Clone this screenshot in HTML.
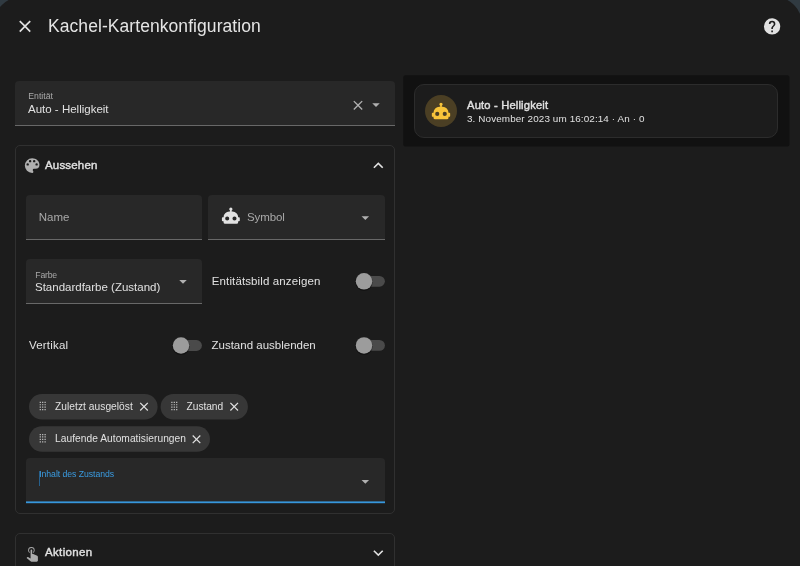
<!DOCTYPE html>
<html lang="de">
<head>
<meta charset="utf-8">
<title>Kachel-Kartenkonfiguration</title>
<style>
*{box-sizing:border-box;margin:0;padding:0}
html,body{width:800px;height:566px;overflow:hidden;background:#303a41;font-family:"Liberation Sans",sans-serif;color:#e1e1e1}
.shape{position:absolute;left:-5.7px;top:-3.5px;width:807.8px;height:620px;background:#1c1c1c;border-radius:27px}
.dialog{position:absolute;left:0;top:0;width:800px;height:566px;overflow:hidden;will-change:transform}
.abs{position:absolute}
.t{position:absolute;white-space:nowrap;line-height:1}
svg{position:absolute;display:block}
.title{left:48px;top:18px;font-size:17.5px;letter-spacing:.065px;color:#e4e4e4}
.field{position:absolute;background:#282828;border-radius:4px 4px 0 0;border-bottom:1px solid #686868}
.flabel{font-size:8.7px;color:#a9a9a9}
.fval{font-size:11.5px;color:#e1e1e1}
.panel{position:absolute;border:1px solid #303030;border-radius:5px}
.ptitle{font-size:11.5px;-webkit-text-stroke:.4px #e1e1e1;color:#e1e1e1}
.lbl{font-size:11.5px;color:#e1e1e1}
.chiptxt{font-size:10.2px;letter-spacing:.05px;color:#e1e1e1}
.card{position:absolute;left:414px;top:84px;width:364px;height:53.5px;border:1px solid #2c2c2c;border-radius:10px;background:#1c1c1c}
.circle{position:absolute;left:425px;top:95px;width:32px;height:32px;border-radius:50%;background:#4b3f24}
</style>
</head>
<body>
<div class="dialog">
  <div class="shape"></div>

  <!-- header -->
  <svg style="left:15px;top:16px" width="21" height="22" viewBox="0 0 21 22"><g transform="translate(0.0 0.3) scale(0.83333)"><path fill="#e1e1e1" d="M19,6.41L17.59,5L12,10.59L6.41,5L5,6.41L10.59,12L5,17.59L6.41,19L12,13.41L17.59,19L19,17.59L13.41,12L19,6.41Z"/></g></svg>
  <div class="t title">Kachel-Kartenkonfiguration</div>
  <svg style="left:762px;top:16px" width="21" height="22" viewBox="0 0 21 22"><g transform="translate(0.3 0.65) scale(0.81667)"><path fill="#e1e1e1" d="M15.07,11.25L14.17,12.17C13.45,12.89 13,13.5 13,15H11V14.5C11,13.39 11.45,12.39 12.17,11.67L13.41,10.41C13.78,10.05 14,9.55 14,9C14,7.89 13.1,7 12,7A2,2 0 0,0 10,9H8A4,4 0 0,1 12,5A4,4 0 0,1 16,9C16,9.88 15.64,10.67 15.07,11.25M13,19H11V17H13M12,2A10,10 0 0,0 2,12A10,10 0 0,0 12,22A10,10 0 0,0 22,12C22,6.47 17.5,2 12,2Z"/></g></svg>

  <!-- entity field -->
  <div class="field" style="left:15px;top:81px;width:380px;height:45px"></div>
  <div class="t flabel" style="left:28.3px;top:92.3px">Entität</div>
  <div class="t fval" style="left:28px;top:104.3px">Auto - Helligkeit</div>
  <svg style="left:350px;top:97px" width="17" height="18" viewBox="0 0 17 18"><g transform="translate(0.0 0.3) scale(0.66667)"><path fill="#b0b0b0" d="M19,6.41L17.59,5L12,10.59L6.41,5L5,6.41L10.59,12L5,17.59L6.41,19L12,13.41L17.59,19L19,17.59L13.41,12L19,6.41Z"/></g></svg>
  <svg style="left:367px;top:95px" width="19" height="20" viewBox="0 0 19 20"><g transform="translate(0.0 0.7) scale(0.75)"><path fill="#b0b0b0" d="M7,10L12,15L17,10H7Z"/></g></svg>

  <!-- preview -->
  <svg style="left:0;top:0" width="800" height="566"><rect x="403.3" y="75.2" width="386.1" height="71.4" rx="2" fill="#111111"/></svg>
  <div class="card"></div>
  <div class="circle"></div>
  <svg style="left:431px;top:101px" width="21" height="21" viewBox="0 0 21 21"><g transform="translate(0.0 0.0) scale(0.83333)"><path fill="#f8c43a" d="M12,2A2,2 0 0,1 14,4C14,4.74 13.6,5.39 13,5.73V7H14A7,7 0 0,1 21,14H22A1,1 0 0,1 23,15V18A1,1 0 0,1 22,19H21V20A2,2 0 0,1 19,22H5A2,2 0 0,1 3,20V19H2A1,1 0 0,1 1,18V15A1,1 0 0,1 2,14H3A7,7 0 0,1 10,7H11V5.73C10.4,5.39 10,4.74 10,4A2,2 0 0,1 12,2M7.5,13A2.5,2.5 0 0,0 5,15.5A2.5,2.5 0 0,0 7.5,18A2.5,2.5 0 0,0 10,15.5A2.5,2.5 0 0,0 7.5,13M16.5,13A2.5,2.5 0 0,0 14,15.5A2.5,2.5 0 0,0 16.5,18A2.5,2.5 0 0,0 19,15.5A2.5,2.5 0 0,0 16.5,13Z"/></g></svg>
  <div class="t" style="left:467px;top:99.5px;font-size:11.2px;letter-spacing:.17px;-webkit-text-stroke:.4px #e1e1e1;color:#e1e1e1">Auto - Helligkeit</div>
  <div class="t" style="left:467px;top:114.2px;font-size:9.9px;letter-spacing:.11px;color:#e1e1e1">3. November 2023 um 16:02:14 · An · 0</div>

  <!-- Aussehen panel -->
  <div class="panel" style="left:15px;top:145px;width:380px;height:369px"></div>
  <svg style="left:22px;top:155px" width="21" height="22" viewBox="0 0 21 22"><g transform="translate(0.4 0.85) scale(0.8125)"><path fill="#b0b0b0" d="M17.5,12A1.5,1.5 0 0,1 16,10.5A1.5,1.5 0 0,1 17.5,9A1.5,1.5 0 0,1 19,10.5A1.5,1.5 0 0,1 17.5,12M14.5,8A1.5,1.5 0 0,1 13,6.5A1.5,1.5 0 0,1 14.5,5A1.5,1.5 0 0,1 16,6.5A1.5,1.5 0 0,1 14.5,8M9.5,8A1.5,1.5 0 0,1 8,6.5A1.5,1.5 0 0,1 9.5,5A1.5,1.5 0 0,1 11,6.5A1.5,1.5 0 0,1 9.5,8M6.5,12A1.5,1.5 0 0,1 5,10.5A1.5,1.5 0 0,1 6.5,9A1.5,1.5 0 0,1 8,10.5A1.5,1.5 0 0,1 6.5,12M12,3A9,9 0 0,0 3,12A9,9 0 0,0 12,21A1.5,1.5 0 0,0 13.5,19.5C13.5,19.11 13.35,18.76 13.11,18.5C12.88,18.23 12.73,17.88 12.73,17.5A1.5,1.5 0 0,1 14.23,16H16A5,5 0 0,0 21,11C21,6.58 16.97,3 12,3Z"/></g></svg>
  <div class="t ptitle" style="left:45px;top:160px;letter-spacing:.17px">Aussehen</div>
  <svg style="left:368px;top:155px" width="22" height="22" viewBox="0 0 22 22"><g transform="translate(0.3 0.5) scale(0.83333)"><path fill="#e1e1e1" d="M7.41,15.41L12,10.83L16.59,15.41L18,14L12,8L6,14L7.41,15.41Z"/></g></svg>

  <!-- Name / Symbol -->
  <div class="field" style="left:26px;top:195px;width:176px;height:45px"></div>
  <div class="t" style="left:38.7px;top:211.8px;font-size:11.5px;color:#a9a9a9">Name</div>
  <div class="field" style="left:208px;top:195px;width:177px;height:45px"></div>
  <svg style="left:221px;top:205px" width="21" height="22" viewBox="0 0 21 22"><g transform="translate(0.1 0.9) scale(0.8125)"><path fill="#e1e1e1" d="M12,2A2,2 0 0,1 14,4C14,4.74 13.6,5.39 13,5.73V7H14A7,7 0 0,1 21,14H22A1,1 0 0,1 23,15V18A1,1 0 0,1 22,19H21V20A2,2 0 0,1 19,22H5A2,2 0 0,1 3,20V19H2A1,1 0 0,1 1,18V15A1,1 0 0,1 2,14H3A7,7 0 0,1 10,7H11V5.73C10.4,5.39 10,4.74 10,4A2,2 0 0,1 12,2M7.5,13A2.5,2.5 0 0,0 5,15.5A2.5,2.5 0 0,0 7.5,18A2.5,2.5 0 0,0 10,15.5A2.5,2.5 0 0,0 7.5,13M16.5,13A2.5,2.5 0 0,0 14,15.5A2.5,2.5 0 0,0 16.5,18A2.5,2.5 0 0,0 19,15.5A2.5,2.5 0 0,0 16.5,13Z"/></g></svg>
  <div class="t" style="left:247px;top:212.3px;font-size:11.5px;letter-spacing:-.1px;color:#a9a9a9">Symbol</div>
  <svg style="left:356px;top:208px" width="20" height="20" viewBox="0 0 20 20"><g transform="translate(0.3 0.7) scale(0.75)"><path fill="#b0b0b0" d="M7,10L12,15L17,10H7Z"/></g></svg>

  <!-- Farbe / Entitätsbild -->
  <div class="field" style="left:26px;top:259px;width:176px;height:45px"></div>
  <div class="t flabel" style="left:35.3px;top:271px;letter-spacing:-.2px">Farbe</div>
  <div class="t fval" style="left:35px;top:281.8px">Standardfarbe (Zustand)</div>
  <svg style="left:174px;top:272px" width="19" height="20" viewBox="0 0 19 20"><g transform="translate(0.0 0.6) scale(0.75)"><path fill="#b0b0b0" d="M7,10L12,15L17,10H7Z"/></g></svg>
  <div class="t lbl" style="left:211.8px;top:276.1px;letter-spacing:.12px">Entitätsbild anzeigen</div>
  <svg style="left:350px;top:267px" width="44" height="28" viewBox="350 267 44 28"><rect x="359.0" y="275.90000000000003" width="25.9" height="10.8" rx="5.4" fill="#4a4a4a"/><circle cx="364.0" cy="282.2" r="8.7" fill="#000" opacity=".35"/><circle cx="364.0" cy="281.3" r="8.25" fill="#9c9c9c"/></svg>

  <!-- Vertikal / Zustand ausblenden -->
  <div class="t lbl" style="left:29px;top:340.1px;letter-spacing:.2px">Vertikal</div>
  <svg style="left:167px;top:331px" width="44" height="28" viewBox="167 331 44 28"><rect x="176.0" y="340.1" width="25.9" height="10.8" rx="5.4" fill="#4a4a4a"/><circle cx="181.0" cy="346.4" r="8.7" fill="#000" opacity=".35"/><circle cx="181.0" cy="345.5" r="8.25" fill="#9c9c9c"/></svg>
  <div class="t lbl" style="left:211.5px;top:340.1px">Zustand ausblenden</div>
  <svg style="left:350px;top:331px" width="44" height="28" viewBox="350 331 44 28"><rect x="359.0" y="340.0" width="25.9" height="10.8" rx="5.4" fill="#4a4a4a"/><circle cx="364.0" cy="346.29999999999995" r="8.7" fill="#000" opacity=".35"/><circle cx="364.0" cy="345.4" r="8.25" fill="#9c9c9c"/></svg>

  <!-- chips -->
  <svg style="left:0;top:380px" width="400" height="80" viewBox="0 380 400 80">
    <rect x="29" y="394" width="128.6" height="25.6" rx="12.8" fill="#373737"/>
    <g transform="translate(35.45 398.7) scale(0.60417)"><path fill="#c4c4c4" d="M7,19V17H9V19H7M11,19V17H13V19H11M15,19V17H17V19H15M7,15V13H9V15H7M11,15V13H13V15H11M15,15V13H17V15H15M7,11V9H9V11H7M11,11V9H13V11H11M15,11V9H17V11H15M7,7V5H9V7H7M11,7V5H13V7H11M15,7V5H17V7H15Z"/></g>
    <g transform="translate(136.75 399.45) scale(0.60417)"><path fill="#e1e1e1" d="M19,6.41L17.59,5L12,10.59L6.41,5L5,6.41L10.59,12L5,17.59L6.41,19L12,13.41L17.59,19L19,17.59L13.41,12L19,6.41Z"/></g>
    <rect x="160.6" y="394" width="87.3" height="25.6" rx="12.8" fill="#373737"/>
    <g transform="translate(167.05 398.7) scale(0.60417)"><path fill="#c4c4c4" d="M7,19V17H9V19H7M11,19V17H13V19H11M15,19V17H17V19H15M7,15V13H9V15H7M11,15V13H13V15H11M15,15V13H17V15H15M7,11V9H9V11H7M11,11V9H13V11H11M15,11V9H17V11H15M7,7V5H9V7H7M11,7V5H13V7H11M15,7V5H17V7H15Z"/></g>
    <g transform="translate(226.95 399.45) scale(0.60417)"><path fill="#e1e1e1" d="M19,6.41L17.59,5L12,10.59L6.41,5L5,6.41L10.59,12L5,17.59L6.41,19L12,13.41L17.59,19L19,17.59L13.41,12L19,6.41Z"/></g>
    <rect x="29" y="426.2" width="181" height="25.6" rx="12.8" fill="#373737"/>
    <g transform="translate(35.45 430.9) scale(0.60417)"><path fill="#c4c4c4" d="M7,19V17H9V19H7M11,19V17H13V19H11M15,19V17H17V19H15M7,15V13H9V15H7M11,15V13H13V15H11M15,15V13H17V15H15M7,11V9H9V11H7M11,11V9H13V11H11M15,11V9H17V11H15M7,7V5H9V7H7M11,7V5H13V7H11M15,7V5H17V7H15Z"/></g>
    <g transform="translate(189.25 432.05) scale(0.60417)"><path fill="#e1e1e1" d="M19,6.41L17.59,5L12,10.59L6.41,5L5,6.41L10.59,12L5,17.59L6.41,19L12,13.41L17.59,19L19,17.59L13.41,12L19,6.41Z"/></g>
  </svg>
  <div class="t chiptxt" style="left:55px;top:402px">Zuletzt ausgelöst</div>
  <div class="t chiptxt" style="left:186.6px;top:402px;letter-spacing:-.05px">Zustand</div>
  <div class="t chiptxt" style="left:55px;top:434px">Laufende Automatisierungen</div>

  <!-- state content select -->
  <div class="field" style="left:26px;top:458px;width:359px;height:45px;border-bottom:none"></div>
  <svg style="left:0;top:490px" width="800" height="20"><rect x="26" y="11.4" width="359" height="1.8" fill="#3797dc"/></svg>
  <div class="t" style="left:39.2px;top:469.6px;font-size:8.7px;letter-spacing:-.05px;color:#3a9be0">Inhalt des Zustands</div>
  <div class="abs" style="left:39px;top:470.5px;width:1px;height:15px;background:#27608c"></div>
  <svg style="left:356px;top:472px" width="20" height="20" viewBox="0 0 20 20"><g transform="translate(0.3 0.5) scale(0.75)"><path fill="#b0b0b0" d="M7,10L12,15L17,10H7Z"/></g></svg>

  <!-- Aktionen panel -->
  <div class="panel" style="left:15px;top:533px;width:380px;height:60px"></div>
  <svg style="left:22px;top:543px" width="21" height="21" viewBox="0 0 21 21"><g transform="translate(0.46 0.0) scale(0.8125)"><path fill="#acacac" d="M10,9A1,1 0 0,1 11,8A1,1 0 0,1 12,9V13.47L13.21,13.6L18.15,15.79C18.68,16.03 19,16.56 19,17.14V21.5C18.97,22.32 18.32,22.97 17.5,23H11C10.62,23 10.26,22.85 10,22.57L5.1,18.37L5.84,17.6C6.03,17.39 6.3,17.28 6.58,17.28H6.8L10,19V9M11,5A4,4 0 0,1 15,9C15,10.5 14.2,11.77 13,12.46V11.24C13.61,10.69 14,9.89 14,9A3,3 0 0,0 11,6A3,3 0 0,0 8,9C8,9.89 8.39,10.69 9,11.24V12.46C7.8,11.77 7,10.5 7,9A4,4 0 0,1 11,5Z"/></g></svg>
  <div class="t ptitle" style="left:45px;top:547.2px;letter-spacing:.35px">Aktionen</div>
  <svg style="left:368px;top:543px" width="22" height="21" viewBox="0 0 22 21"><g transform="translate(0.3 0.0) scale(0.83333)"><path fill="#e1e1e1" d="M7.41,8.58L12,13.17L16.59,8.58L18,10L12,16L6,10L7.41,8.58Z"/></g></svg>

</div>
</body>
</html>
